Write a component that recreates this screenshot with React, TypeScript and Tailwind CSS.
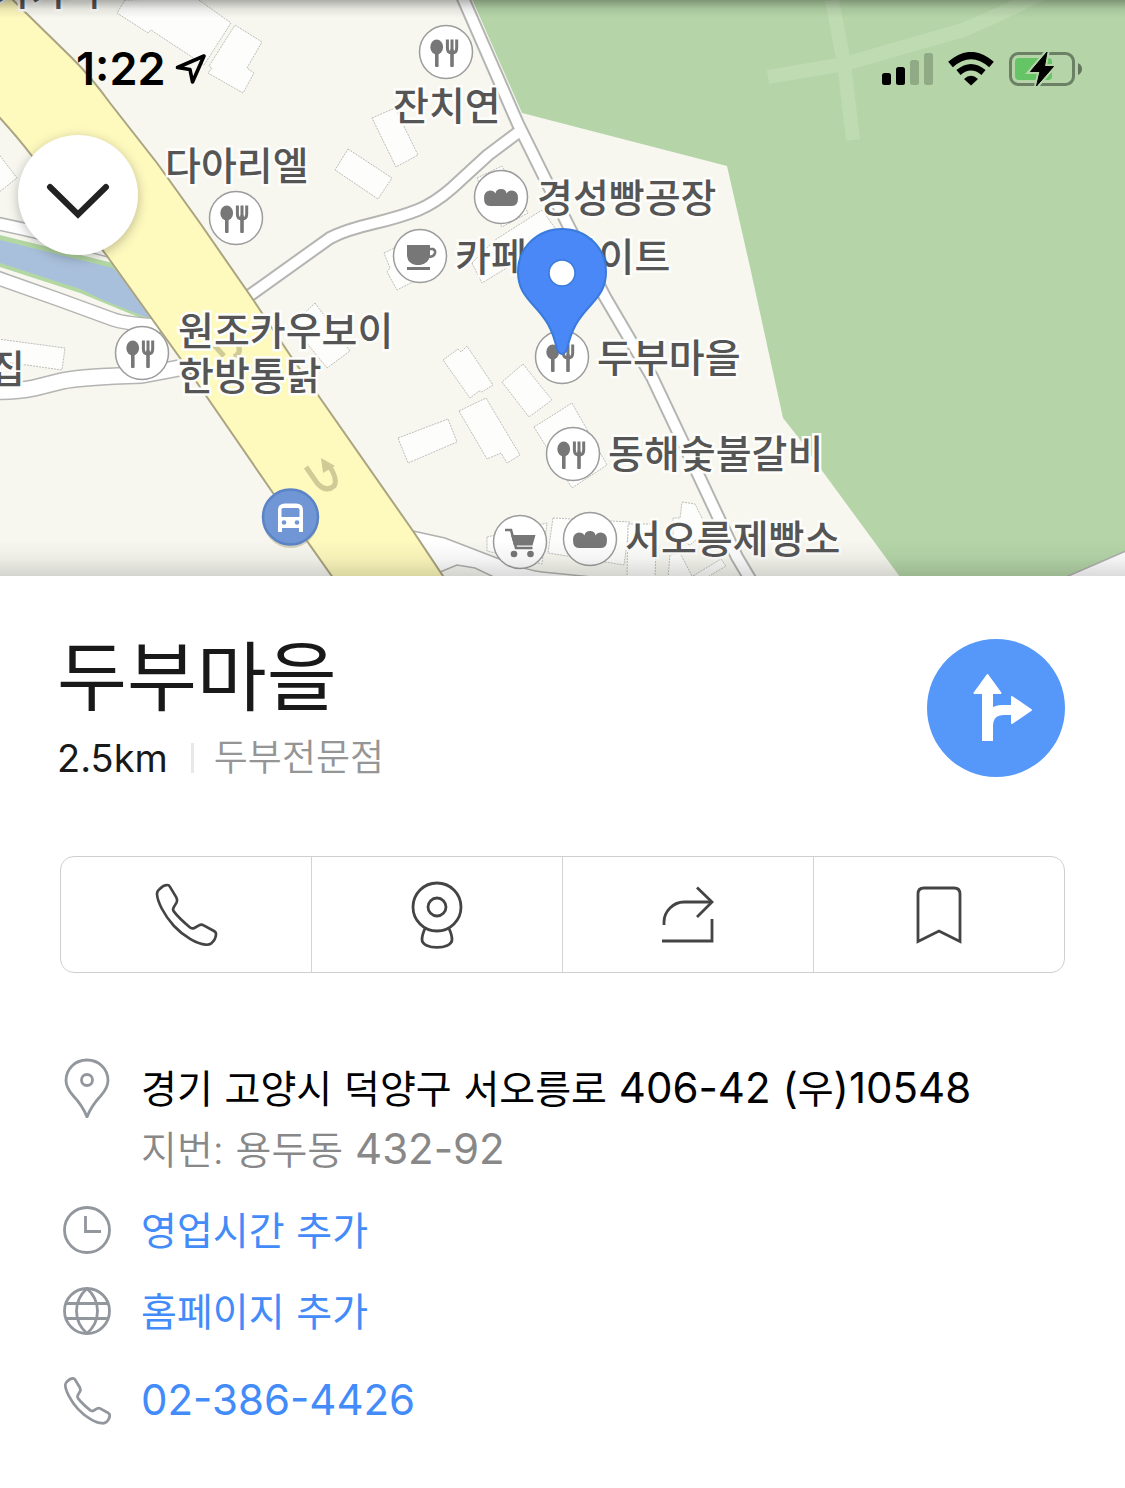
import React from "react";

type Point = { x: number; y: number };

const buildings = [
  "125,0 117,13 148,33 151,30 204,65 231,23 196,-2",
  "235,25 262,42 247,68 254,73 243,93 208,73 212,68 209,66",
  "348,149 392,178 378,199 335,170",
  "372,118 395,108 418,155 396,167",
  "477,178 502,166 528,213 502,227",
  "472,263 482,283 560,235 542,210 495,240",
  "384,253 420,235 440,268 397,290 387,272 390,268",
  "-2,153 17,178 -2,193",
  "-2,339 65,348 62,370 -2,361",
  "315,303 350,351 327,368 292,325",
  "443,360 458,349 461,352 467,346 493,385 482,392 479,391 470,398",
  "523,364 552,400 529,417 502,382",
  "459,411 486,398 520,455 507,463 501,453 487,459",
  "398,438 448,419 457,442 408,463",
  "534,427 572,403 607,465 572,488",
  "553,518 630,522 624,565 548,553",
  "487,537 547,523 542,564 487,551",
  "628,524 657,524 655,578 627,578",
  "682,502 695,504 708,530 690,545 673,537 673,518 680,518",
  "668,578 670,555 680,553 693,578",
  "693,576 721,559 726,566 706,578",
];

function Road({ d, width }: { d: string; width: number }) {
  return (
    <g fill="none" strokeLinejoin="round">
      <path d={d} stroke="#b4b4b2" strokeWidth={width + 3} />
      <path d={d} stroke="#ffffff" strokeWidth={width} />
    </g>
  );
}

function Disc({ x, y, children }: Point & { children: React.ReactNode }) {
  return (
    <g transform={`translate(${x} ${y})`}>
      <circle r="26.5" fill="#fff" stroke="#9c9c9c" strokeWidth="1.5" />
      {children}
    </g>
  );
}

function Restaurant(p: Point) {
  return (
    <Disc {...p}>
      <g fill="#777">
        <ellipse cx="-9.3" cy="-5" rx="6.4" ry="7.400" />
        <rect x="-11" y="-4" width="3.6" height="19" rx="1" />
        <rect x="4.2" y="-3" width="3.6" height="18" rx="1" />
      </g>
      <path
        d="M1.4 -12.5V-4Q1.4 1 6 1Q10.7 1 10.7 -4V-12.5M6 -12.5V0"
        fill="none"
        stroke="#777"
        strokeWidth="3"
      />
    </Disc>
  );
}

function Bakery(p: Point) {
  return (
    <Disc {...p}>
      <path
        d="M-11 -6.500Q-7 -6.500 -5.500 -3.500Q-5 -8 0 -8Q5 -8 5.500 -3.500Q7 -6.500 11 -6.500Q17 -6 17 1Q17 9 11 9H-11Q-17 9 -17 1Q-17 -6 -11 -6.500Z"
        fill="#777"
      />
    </Disc>
  );
}

function Cafe(p: Point) {
  return (
    <Disc {...p}>
      <path d="M-13 -11H10V0Q8 8 0 9H-4Q-12 8 -13 0Z" fill="#777" />
      <path d="M9 -7H13Q15.500 -6 15 -3Q14 1 8 1" fill="none" stroke="#777" strokeWidth="2.600" />
      <path d="M-13 12.500H10" stroke="#777" strokeWidth="3" />
    </Disc>
  );
}

function Mart(p: Point) {
  return (
    <Disc {...p}>
      <path d="M-15 -12H-9L-4 6H12.500" fill="none" stroke="#777" strokeWidth="2.600" />
      <path d="M-9 -7H15.500L12.500 3.500H-6Z" fill="#777" />
      <circle cx="-6" cy="12" r="3.300" fill="#777" />
      <circle cx="10.500" cy="12" r="3.300" fill="#777" />
    </Disc>
  );
}

function MapArt() {
  const highway =
    "M-10 -20L13 0L23 10L72 58Q92 78 110 103L157 163L200 223L252 298L290 355L413 531L447 582H336L273 493L180 358L107 256L32 156Q17 136 -10 107Z";
  return (
    <svg className="absolute left-0 top-0" width="1125" height="576" viewBox="0 0 1125 576" aria-hidden="true">
      <path d="M0 0H1125V576H0Z" fill="#f7f7f0" />
      <path d="M0 235L125 266L160 320L143 319L80 293L0 267Z" fill="#b3d7a3" />
      <path d="M0 240L113 268L160 320L143 316L103 300L80 289L0 263Z" fill="#a9c0dc" />
      <path d="M-5 223Q50 234 120 254" fill="none" stroke="#b4b4b2" strokeWidth="14" />
      <path d="M-5 223Q50 234 120 254" fill="none" stroke="#fff" strokeWidth="11" />
      <Road d="M-5 277L60 300L112 319Q125 324 165 326" width={12} />
      <Road d="M-8 391Q15 392 34 388L62 381Q80 377 142 375L190 366" width={15} />

      <path
        d="M472 -1L522 113L727 166L750 267L783 418L798 437L823 472L900 577H1126V-1Z"
        fill="#b5d5a8"
      />
      <g fill="none" stroke="#bedbb2" strokeWidth="14">
        <path d="M832 0L844 63L853 140" />
        <path d="M768 77L845 64L900 48L963 30Q1000 15 1040 -6" />
      </g>
      <path d="M1066 577L1126 551V577Z" fill="#fff" stroke="#b0b0b0" strokeWidth="1.500" />

      <g fill="#fdfdfb" stroke="#bdbdbb" strokeWidth="1" strokeDasharray="2 1">
        {buildings.map((points) => (
          <polygon key={points} points={points} />
        ))}
      </g>

      <path
        d="M413 531L445 538L502 560Q525 570 542 572L602 578H496L475 568L457 565L440 572Z"
        fill="#fff"
        stroke="#b0b0ae"
        strokeWidth="1.500"
      />
      <g fill="none" strokeLinejoin="round">
        <g stroke="#b4b4b2" strokeWidth="14">
          <path d="M246 298L330 238Q345 230 375 223Q400 217 418 210Q435 203 452 188L488 155L520 131" />
          <path d="M462 -4L518 124L567 223L605 297L652 377L697 472L737 557L753 584" />
        </g>
        <g stroke="#fff" strokeWidth="10">
          <path d="M246 298L330 238Q345 230 375 223Q400 217 418 210Q435 203 452 188L488 155L520 131" />
          <path d="M462 -4L518 124L567 223L605 297L652 377L697 472L737 557L753 584" />
        </g>
      </g>
      <path d={highway} fill="#fef9bd" stroke="#aaa481" strokeWidth="2" />

      <g fill="none" stroke="#d0ca96" strokeWidth="5">
        <path d="M306 467L317 483Q326 493 334 486Q338 480 330 467" />
        <path d="M214 345L224 356M238 344Q242 353 234 357" />
      </g>
      <path d="M321 458L335 466L323 473Z" fill="#d0ca96" />

      <Restaurant x={446} y={52} />
      <Restaurant x={236} y={218} />
      <Restaurant x={142} y={353} />
      <Restaurant x={562} y={357} />
      <Restaurant x={573} y={454} />
      <Bakery x={501} y={197} />
      <Cafe x={420} y={256} />
      <Mart x={520} y={542} />
      <Bakery x={590} y={539} />

      <ellipse cx="290.500" cy="519" rx="28" ry="29" fill="#b0ab83" opacity="0.500" />
      <circle cx="290.500" cy="517" r="27.500" fill="#7096d6" stroke="#5b83c6" strokeWidth="2.500" />
      <path
        d="M278 532V510Q278 503.500 285 503.500H296Q303 503.500 303 510V532H299V528H282V532ZM281.500 509V517H299.500V509Q299 508 297 508H284Q282 508 281.500 509Z"
        fill="#fff"
        fillRule="evenodd"
      />
      <circle cx="284" cy="522.500" r="2.300" fill="#7096d6" />
      <circle cx="297" cy="522.500" r="2.300" fill="#7096d6" />
    </svg>
  );
}

const labels = [
  { text: "가가각", place: "left-[-5px] top-[-32px]" },
  { text: "잔치연", place: "left-[393px] top-[83px]" },
  { text: "다아리엘", place: "left-[165px] top-[143px]" },
  { text: "경성빵공장", place: "left-[537px] top-[175px]" },
  { text: "카페브라이트", place: "left-[455px] top-[234px]" },
  { text: "원조카우보이\n한방통닭", place: "left-[178px] top-[308px]" },
  { text: "집", place: "left-[-11px] top-[346px]" },
  { text: "두부마을", place: "left-[597px] top-[335px]" },
  { text: "동해숯불갈비", place: "left-[608px] top-[431px]" },
  { text: "서오릉제빵소", place: "left-[625px] top-[516px]" },
];

function PhoneIcon({ className, strokeWidth }: { className: string; strokeWidth: number }) {
  return (
    <svg
      className={className}
      viewBox="310 126 195 195"
      fill="none"
      stroke="currentColor"
      strokeWidth={strokeWidth}
      strokeLinejoin="round"
      aria-hidden="true"
    >
      <path d="M327 147C335 138 345 135 350 135Q355 135 357 139L377 172Q381 180 378 187L369 202Q365 209 370 215C385 235 403 250 419 263Q425 267 431 264L445 256Q452 252 459 256L490 273Q497 277 496 284C495 296 489 304 482 310Q475 315 465 314C440 313 400 290 370 258C340 225 320 185 319 162Q319 153 327 147Z" />
    </svg>
  );
}

function StatusBar() {
  return (
    <div className="absolute inset-x-0 top-[42px] flex h-[54px] items-center justify-between pl-[76px] pr-[42px] text-black">
      <div className="flex items-center gap-[10px]">
        <span className="text-[45px] font-semibold leading-[54px]">1:22</span>
        <svg width="32" height="32" viewBox="0 0 32 32" aria-hidden="true">
          <path d="M2.500 14.500L29 3L17.500 29L15 16.500Z" fill="none" stroke="#000" strokeWidth="3.600" strokeLinejoin="round" />
        </svg>
      </div>
      <div className="flex items-center gap-[15px]">
        <svg width="51" height="34" viewBox="0 0 51 34" aria-hidden="true">
          <rect x="0" y="21" width="9" height="12" rx="2.500" />
          <rect x="14" y="15" width="9" height="18" rx="2.500" />
          <rect x="28" y="8" width="9" height="25" rx="2.500" opacity="0.200" />
          <rect x="42" y="1" width="9" height="32" rx="2.500" opacity="0.200" />
        </svg>
        <svg width="46" height="34" viewBox="0 0 46 34" aria-hidden="true">
          <path d="M2.500 12.500Q23 -5.500 43.500 12.500" fill="none" stroke="#000" strokeWidth="7" />
          <path d="M10.500 20.500Q23 10 35.500 20.500" fill="none" stroke="#000" strokeWidth="6.500" />
          <path d="M16 27Q23 20.500 30 27L23 33.500Z" />
        </svg>
        <svg width="74" height="36" viewBox="0 0 74 36" aria-hidden="true">
          <rect x="1.500" y="2.500" width="63" height="31" rx="8" fill="none" stroke="#000" strokeWidth="3" opacity="0.400" />
          <path d="M69 12Q73 14 73 18Q73 22 69 24Z" opacity="0.450" />
          <rect x="6" y="7" width="37" height="22" rx="4" fill="#64c466" />
          <path d="M38 1L21.500 20.500H31L27.500 35L44.500 15.500H35.500Z" stroke="#b5d5a8" strokeWidth="5" />
          <path d="M38 1L21.500 20.500H31L27.500 35L44.500 15.500H35.500Z" stroke="#000" strokeWidth="1" strokeLinejoin="round" />
        </svg>
      </div>
    </div>
  );
}

function MapView() {
  return (
    <section aria-label="지도" className="relative h-[576px] overflow-hidden bg-[#f7f7f0]">
      <MapArt />
      {labels.map(({ text, place }) => (
        <span
          key={text}
          className={`absolute whitespace-pre text-[39px] font-medium leading-[45px] text-[#555] [paint-order:stroke_fill] [-webkit-text-stroke:5px_#fdfdfb] ${place}`}
        >
          {text}
        </span>
      ))}
      <svg className="absolute left-[514px] top-[226px]" width="96" height="132" viewBox="0 0 96 132" aria-hidden="true">
        <path
          d="M48 3C23 3 4 22 4 46C4 61 10 69 20 80C32 93 38 102 43 123Q45 128 48 128Q51 128 53 123C58 102 64 93 76 80C86 69 92 61 92 46C92 22 73 3 48 3Z"
          fill="#4a88f7"
          stroke="#3a7adb"
          strokeWidth="2"
        />
        <circle cx="48" cy="47" r="13" fill="#fff" stroke="#3a7adb" strokeWidth="1.500" />
      </svg>
      <div className="absolute inset-x-0 top-0 h-[18px] bg-gradient-to-b from-black/30 via-black/8 to-transparent" />
      <div className="absolute inset-x-0 bottom-0 h-[36px] bg-gradient-to-t from-black/14 via-black/4 to-transparent" />
      <StatusBar />
      <button
        type="button"
        aria-label="닫기"
        className="absolute left-[18px] top-[135px] flex size-[120px] items-center justify-center rounded-full bg-white shadow-[0_3px_12px_rgba(0,0,0,0.25)]"
      >
        <svg width="64" height="38" viewBox="0 0 64 38" className="mt-[12px]" fill="none" stroke="#222" strokeWidth="6" strokeLinecap="round" aria-hidden="true">
          <path d="M4 5L32 32.500L60 5" />
        </svg>
      </button>
    </section>
  );
}

const actionClass = "flex flex-1 items-center justify-center text-[#444]";

function Actions() {
  return (
    <div className="mt-[73px] flex h-[117px] divide-x divide-[#d3d3d3] rounded-[14px] border border-[#cfcfcf]">
      <button type="button" aria-label="전화" className={actionClass}>
        <PhoneIcon className="size-[65px]" strokeWidth={8} />
      </button>
      <button type="button" aria-label="거리뷰" className={actionClass}>
        <svg width="52" height="68" viewBox="0 0 52 68" fill="none" stroke="currentColor" strokeWidth="2.800" aria-hidden="true">
          <circle cx="26" cy="26" r="24" />
          <circle cx="26" cy="26" r="9" />
          <path d="M14 47.500Q11 54 11 58.500C11 69 41 69 41 58.500Q41 54 38 47.500" />
        </svg>
      </button>
      <button type="button" aria-label="공유" className={actionClass}>
        <svg width="52" height="58" viewBox="0 0 52 58" fill="none" stroke="currentColor" strokeWidth="2.800" aria-hidden="true">
          <path d="M2 39V36Q2 28 8 22Q14 16 22 16H50" />
          <path d="M35 1.500L50 16L35 31" />
          <path d="M0 55H50V33" />
        </svg>
      </button>
      <button type="button" aria-label="저장" className={actionClass}>
        <svg width="46" height="58" viewBox="0 0 46 58" fill="none" stroke="currentColor" strokeWidth="2.800" aria-hidden="true">
          <path d="M2 55.500V8Q2 2 8 2H38Q44 2 44 8V55.500L23 45Z" />
        </svg>
      </button>
    </div>
  );
}

function InfoRow({ icon, className = "", children }: { icon: React.ReactNode; className?: string; children: React.ReactNode }) {
  return (
    <li className={`flex gap-[27px] ${className}`}>
      <div className="flex h-[60px] w-[54px] shrink-0 items-center justify-center text-[#92969d]">{icon}</div>
      <div className="text-[42px] leading-[60px]">{children}</div>
    </li>
  );
}

/* Hangul is set slightly smaller than the figures and spaces around it. */
function Ko({ children }: { children: string }) {
  return (
    <>
      {children.split(" ").map((word, i) => (
        <React.Fragment key={word}>
          {i > 0 && " "}
          <span className="text-[39px]">{word}</span>
        </React.Fragment>
      ))}
    </>
  );
}

export default function App() {
  return (
    <main className="min-h-screen bg-white font-['Inter','Noto_Sans_CJK_KR',sans-serif] text-[#191919]">
      <MapView />
      <section className="px-[60px] pt-[63px]">
        <div className="flex items-start justify-between">
          <div>
            <h1 className="-ml-[3px] text-[76px] leading-[76px]">두부마을</h1>
            <div className="mt-[18px] flex items-center text-[38px] leading-[50px]">
              <span className="-ml-[3px]">2.5km</span>
              <span className="ml-[23px] h-[30px] w-[3px] bg-[#e8e8e8]" />
              <span className="ml-[20px] text-[37px] font-[350] text-[#959595]">두부전문점</span>
            </div>
          </div>
          <button type="button" aria-label="길찾기" className="flex size-[138px] items-center justify-center rounded-full bg-[#5598f9]">
            <svg width="138" height="138" viewBox="0 0 138 138" aria-hidden="true">
              <g fill="#fff" stroke="#fff" strokeWidth="2" strokeLinejoin="round">
                <path d="M60.500 36L73.500 54H47.500Z" />
                <path d="M85 58L104 71L85 84Z" />
              </g>
              <path d="M55 53H66V68Q70 66 75 66H85V76H77Q66 76 66 87V102H55Z" fill="#fff" />
            </svg>
          </button>
        </div>
        <Actions />
        <ul className="mt-[85px] flex flex-col gap-[20px] pb-[58px]">
          <InfoRow
            icon={
              <svg width="46" height="60" viewBox="0 0 46 60" fill="none" stroke="currentColor" strokeWidth="2.800" aria-hidden="true">
                <path d="M23 2C11 2 2 11 2 22.500C2 29 5 33 9 37.500C16 45 20 51 23 59C26 51 30 45 37 37.500C41 33 44 29 44 22.500C44 11 35 2 23 2Z" />
                <circle cx="23" cy="22" r="5.500" />
              </svg>
            }
          >
            <p className="text-black">
              <Ko>경기 고양시 덕양구 서오릉로</Ko> 406-42 (<Ko>우</Ko>)10548
            </p>
            <p className="text-[#888]">
              <span className="font-[350]">
                <Ko>지번: 용두동</Ko>
              </span>{" "}
              432-92
            </p>
          </InfoRow>
          <InfoRow
            icon={
              <svg width="48" height="48" viewBox="0 0 48 48" fill="none" stroke="currentColor" strokeWidth="2.800" aria-hidden="true">
                <circle cx="24" cy="24" r="22.500" />
                <path d="M22.500 10V25.500H38" />
              </svg>
            }
          >
            <a href="#hours" className="block text-[#428bf9]">
              <Ko>영업시간 추가</Ko>
            </a>
          </InfoRow>
          <InfoRow
            icon={
              <svg width="48" height="48" viewBox="0 0 48 48" fill="none" stroke="currentColor" strokeWidth="2.800" aria-hidden="true">
                <circle cx="24" cy="24" r="22.500" />
                <path d="M24 1.500C10 14 10 34 24 46.500C38 34 38 14 24 1.500ZM3 16.500H45M3 31.500H45" />
              </svg>
            }
          >
            <a href="#homepage" className="block text-[#428bf9]">
              <Ko>홈페이지 추가</Ko>
            </a>
          </InfoRow>
          <InfoRow className="mt-[8px]" icon={<PhoneIcon className="size-[49px]" strokeWidth={11} />}>
            <a href="tel:02-386-4426" className="block text-[#428bf9]">02-386-4426</a>
          </InfoRow>
        </ul>
      </section>
    </main>
  );
}
